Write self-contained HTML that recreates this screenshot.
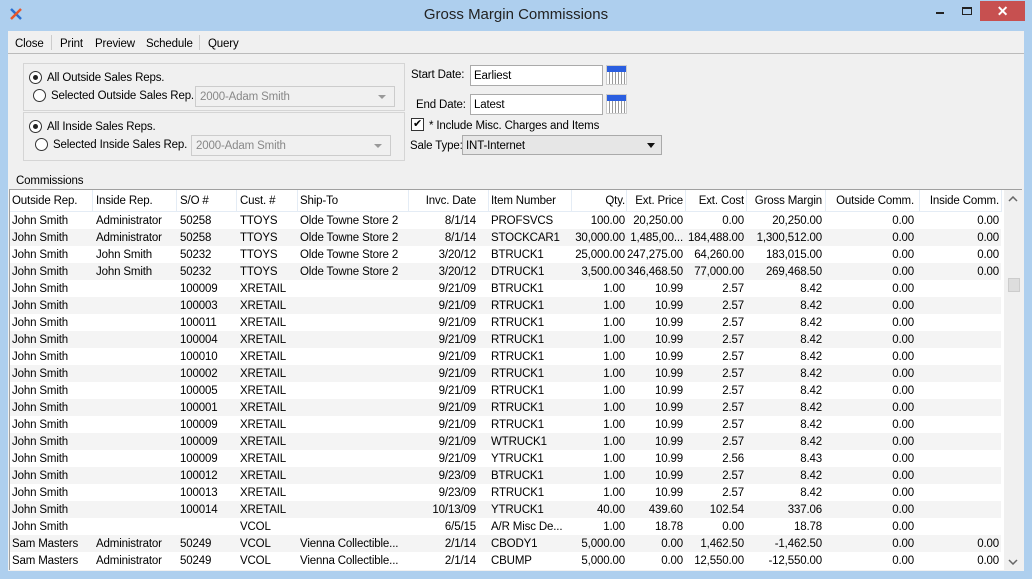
<!DOCTYPE html>
<html><head><meta charset="utf-8"><style>
*{box-sizing:border-box;margin:0;padding:0}
body{width:1032px;height:579px;background:#aecfee;font-family:"Liberation Sans",sans-serif;font-size:11.5px;letter-spacing:-0.15px;color:#000;position:relative;overflow:hidden}
.abs{position:absolute}
#client{left:8px;top:31px;width:1016px;height:540px;background:#f0f0f0}
.title{left:0;top:6px;width:1032px;text-align:center;font-size:15px;letter-spacing:0;color:#222}
.menu span{position:absolute;top:38px}
.sep{position:absolute;top:35px;width:1px;height:15px;background:#ccc}
.grp{border:1px solid #d5d5d5;background:#f0f0f0}
.radio{width:13px;height:13px;border:1px solid #333;border-radius:50%;background:#fff}
.radio.on::after{content:"";position:absolute;left:3px;top:3px;width:5px;height:5px;border-radius:50%;background:#222}
.combo{border:1px solid #ccc;background:#f0f0f0;color:#888;padding:4px 4px;height:21px}
.combo::after{content:"";position:absolute;right:8px;top:8px;border-left:4px solid transparent;border-right:4px solid transparent;border-top:4px solid #999}
.inp{border:1px solid #aaa;background:#fff;padding:4px 3px;height:21px}
.cal{width:21px;height:20px;border:1px solid #ccc;background:repeating-linear-gradient(90deg,#fff 0 2px,#999 2px 3px),#fff}
.cal::before{content:"";position:absolute;left:0;top:0;width:19px;height:6px;background:#2a5ee0}
#grid{left:9px;top:189px;width:1013px;height:381px;background:#fff;border-top:1px solid #a0a0a0;border-left:1px solid #a0a0a0}
.row{position:absolute;left:0;height:17px;width:991px;white-space:nowrap}
.row.alt{background:#f4f4f4}
.row div{position:absolute;top:3px;overflow:hidden;white-space:nowrap}
.hdr{height:22px;border-bottom:1px solid #e4ecf5}
.hdr div{top:5px}
.hl{position:absolute;top:0;width:1px;height:22px;background:#e4ecf5}
.c1{left:2px;width:80px}.c2{left:86px;width:80px}.c3{left:170px;width:60px}.c4{left:230px;width:60px}.c5{left:290px;width:106px}
.c6{left:398px;width:68px;text-align:right}.c7{left:481px;width:80px}.c8{left:561px;width:54px;text-align:right}.c9{left:616px;width:57px;text-align:right}
.c10{left:675px;width:59px;text-align:right}.c11{left:736px;width:76px;text-align:right}.c12{left:815px;width:89px;text-align:right}.c13{left:909px;width:80px;text-align:right}
</style></head><body>
<div class="abs" style="left:9px;top:7px;width:14px;height:14px">
<svg width="14" height="14" viewBox="0 0 14 14"><path d="M2 2 L12 12" stroke="#2a6fd0" stroke-width="2.5"/><path d="M12 2 L2 12" stroke="#e8562a" stroke-width="2.5"/></svg></div>
<div class="abs title">Gross Margin Commissions</div>
<div class="abs" style="left:936px;top:12px;width:8px;height:2px;background:#222"></div>
<div class="abs" style="left:962px;top:7px;width:10px;height:8px;border:1px solid #222;border-top-width:2px"></div>
<div class="abs" style="left:980px;top:1px;width:45px;height:20px;background:#c75050;color:#fff;text-align:center;font-size:14px;font-weight:bold;line-height:20px">✕</div>
<div id="client" class="abs"></div>
<div class="menu"><span style="left:15px">Close</span><span style="left:60px">Print</span><span style="left:95px">Preview</span><span style="left:146px">Schedule</span><span style="left:208px">Query</span></div>
<div class="sep" style="left:51px"></div><div class="sep" style="left:199px"></div>
<div class="abs" style="left:8px;top:53px;width:1016px;height:1px;background:#bbb"></div>
<div class="abs grp" style="left:23px;top:63px;width:382px;height:48px"></div>
<div class="abs grp" style="left:23px;top:112px;width:382px;height:49px"></div>
<div class="abs radio on" style="left:29px;top:71px"></div><div class="abs" style="left:47px;top:72px">All Outside Sales Reps.</div>
<div class="abs radio" style="left:33px;top:89px"></div><div class="abs" style="left:51px;top:90px">Selected Outside Sales Rep.</div>
<div class="abs combo" style="left:195px;top:86px;width:200px">2000-Adam Smith</div>
<div class="abs radio on" style="left:29px;top:120px"></div><div class="abs" style="left:47px;top:121px">All Inside Sales Reps.</div>
<div class="abs radio" style="left:35px;top:138px"></div><div class="abs" style="left:53px;top:139px">Selected Inside Sales Rep.</div>
<div class="abs combo" style="left:191px;top:135px;width:200px">2000-Adam Smith</div>
<div class="abs" style="left:411px;top:69px">Start Date:</div>
<div class="abs inp" style="left:470px;top:65px;width:133px">Earliest</div>
<div class="abs cal" style="left:606px;top:65px"></div>
<div class="abs" style="left:416px;top:99px">End Date:</div>
<div class="abs inp" style="left:470px;top:94px;width:133px">Latest</div>
<div class="abs cal" style="left:606px;top:94px"></div>
<div class="abs" style="left:411px;top:118px;width:13px;height:13px;border:1px solid #333;background:#fff;font-size:11px;line-height:11px;text-align:center">✔</div>
<div class="abs" style="left:429px;top:120px">* Include Misc. Charges and Items</div>
<div class="abs" style="left:410px;top:140px">Sale Type:</div>
<div class="abs" style="left:462px;top:135px;width:200px;height:20px;border:1px solid #aaa;background:#e6e6e6;padding:4px 3px">INT-Internet<span style="position:absolute;right:6px;top:7px;border-left:4px solid transparent;border-right:4px solid transparent;border-top:5px solid #111"></span></div>
<div class="abs" style="left:16px;top:175px">Commissions</div>
<div id="grid" class="abs">
<div class="row hdr"><div class="c1">Outside Rep.</div><div class="c2">Inside Rep.</div><div class="c3">S/O #</div><div class="c4">Cust. #</div><div class="c5">Ship-To</div><div class="c6">Invc. Date</div><div class="c7">Item Number</div><div class="c8">Qty.</div><div class="c9">Ext. Price</div><div class="c10">Ext. Cost</div><div class="c11">Gross Margin</div><div class="c12">Outside Comm.</div><div class="c13">Inside Comm.</div>
<span class="hl" style="left:82px"></span><span class="hl" style="left:166px"></span><span class="hl" style="left:226px"></span><span class="hl" style="left:287px"></span><span class="hl" style="left:398px"></span><span class="hl" style="left:478px"></span><span class="hl" style="left:561px"></span><span class="hl" style="left:616px"></span><span class="hl" style="left:675px"></span><span class="hl" style="left:736px"></span><span class="hl" style="left:815px"></span><span class="hl" style="left:909px"></span><span class="hl" style="left:991px"></span></div>
<div class="row" style="top:22px"><div class="c1">John Smith</div><div class="c2">Administrator</div><div class="c3">50258</div><div class="c4">TTOYS</div><div class="c5">Olde Towne Store 2</div><div class="c6">8/1/14</div><div class="c7">PROFSVCS</div><div class="c8">100.00</div><div class="c9">20,250.00</div><div class="c10">0.00</div><div class="c11">20,250.00</div><div class="c12">0.00</div><div class="c13">0.00</div></div>
<div class="row alt" style="top:39px"><div class="c1">John Smith</div><div class="c2">Administrator</div><div class="c3">50258</div><div class="c4">TTOYS</div><div class="c5">Olde Towne Store 2</div><div class="c6">8/1/14</div><div class="c7">STOCKCAR1</div><div class="c8">30,000.00</div><div class="c9">1,485,00...</div><div class="c10">184,488.00</div><div class="c11">1,300,512.00</div><div class="c12">0.00</div><div class="c13">0.00</div></div>
<div class="row" style="top:56px"><div class="c1">John Smith</div><div class="c2">John Smith</div><div class="c3">50232</div><div class="c4">TTOYS</div><div class="c5">Olde Towne Store 2</div><div class="c6">3/20/12</div><div class="c7">BTRUCK1</div><div class="c8">25,000.00</div><div class="c9">247,275.00</div><div class="c10">64,260.00</div><div class="c11">183,015.00</div><div class="c12">0.00</div><div class="c13">0.00</div></div>
<div class="row alt" style="top:73px"><div class="c1">John Smith</div><div class="c2">John Smith</div><div class="c3">50232</div><div class="c4">TTOYS</div><div class="c5">Olde Towne Store 2</div><div class="c6">3/20/12</div><div class="c7">DTRUCK1</div><div class="c8">3,500.00</div><div class="c9">346,468.50</div><div class="c10">77,000.00</div><div class="c11">269,468.50</div><div class="c12">0.00</div><div class="c13">0.00</div></div>
<div class="row" style="top:90px"><div class="c1">John Smith</div><div class="c3">100009</div><div class="c4">XRETAIL</div><div class="c6">9/21/09</div><div class="c7">BTRUCK1</div><div class="c8">1.00</div><div class="c9">10.99</div><div class="c10">2.57</div><div class="c11">8.42</div><div class="c12">0.00</div></div>
<div class="row alt" style="top:107px"><div class="c1">John Smith</div><div class="c3">100003</div><div class="c4">XRETAIL</div><div class="c6">9/21/09</div><div class="c7">RTRUCK1</div><div class="c8">1.00</div><div class="c9">10.99</div><div class="c10">2.57</div><div class="c11">8.42</div><div class="c12">0.00</div></div>
<div class="row" style="top:124px"><div class="c1">John Smith</div><div class="c3">100011</div><div class="c4">XRETAIL</div><div class="c6">9/21/09</div><div class="c7">RTRUCK1</div><div class="c8">1.00</div><div class="c9">10.99</div><div class="c10">2.57</div><div class="c11">8.42</div><div class="c12">0.00</div></div>
<div class="row alt" style="top:141px"><div class="c1">John Smith</div><div class="c3">100004</div><div class="c4">XRETAIL</div><div class="c6">9/21/09</div><div class="c7">RTRUCK1</div><div class="c8">1.00</div><div class="c9">10.99</div><div class="c10">2.57</div><div class="c11">8.42</div><div class="c12">0.00</div></div>
<div class="row" style="top:158px"><div class="c1">John Smith</div><div class="c3">100010</div><div class="c4">XRETAIL</div><div class="c6">9/21/09</div><div class="c7">RTRUCK1</div><div class="c8">1.00</div><div class="c9">10.99</div><div class="c10">2.57</div><div class="c11">8.42</div><div class="c12">0.00</div></div>
<div class="row alt" style="top:175px"><div class="c1">John Smith</div><div class="c3">100002</div><div class="c4">XRETAIL</div><div class="c6">9/21/09</div><div class="c7">RTRUCK1</div><div class="c8">1.00</div><div class="c9">10.99</div><div class="c10">2.57</div><div class="c11">8.42</div><div class="c12">0.00</div></div>
<div class="row" style="top:192px"><div class="c1">John Smith</div><div class="c3">100005</div><div class="c4">XRETAIL</div><div class="c6">9/21/09</div><div class="c7">RTRUCK1</div><div class="c8">1.00</div><div class="c9">10.99</div><div class="c10">2.57</div><div class="c11">8.42</div><div class="c12">0.00</div></div>
<div class="row alt" style="top:209px"><div class="c1">John Smith</div><div class="c3">100001</div><div class="c4">XRETAIL</div><div class="c6">9/21/09</div><div class="c7">RTRUCK1</div><div class="c8">1.00</div><div class="c9">10.99</div><div class="c10">2.57</div><div class="c11">8.42</div><div class="c12">0.00</div></div>
<div class="row" style="top:226px"><div class="c1">John Smith</div><div class="c3">100009</div><div class="c4">XRETAIL</div><div class="c6">9/21/09</div><div class="c7">RTRUCK1</div><div class="c8">1.00</div><div class="c9">10.99</div><div class="c10">2.57</div><div class="c11">8.42</div><div class="c12">0.00</div></div>
<div class="row alt" style="top:243px"><div class="c1">John Smith</div><div class="c3">100009</div><div class="c4">XRETAIL</div><div class="c6">9/21/09</div><div class="c7">WTRUCK1</div><div class="c8">1.00</div><div class="c9">10.99</div><div class="c10">2.57</div><div class="c11">8.42</div><div class="c12">0.00</div></div>
<div class="row" style="top:260px"><div class="c1">John Smith</div><div class="c3">100009</div><div class="c4">XRETAIL</div><div class="c6">9/21/09</div><div class="c7">YTRUCK1</div><div class="c8">1.00</div><div class="c9">10.99</div><div class="c10">2.56</div><div class="c11">8.43</div><div class="c12">0.00</div></div>
<div class="row alt" style="top:277px"><div class="c1">John Smith</div><div class="c3">100012</div><div class="c4">XRETAIL</div><div class="c6">9/23/09</div><div class="c7">BTRUCK1</div><div class="c8">1.00</div><div class="c9">10.99</div><div class="c10">2.57</div><div class="c11">8.42</div><div class="c12">0.00</div></div>
<div class="row" style="top:294px"><div class="c1">John Smith</div><div class="c3">100013</div><div class="c4">XRETAIL</div><div class="c6">9/23/09</div><div class="c7">RTRUCK1</div><div class="c8">1.00</div><div class="c9">10.99</div><div class="c10">2.57</div><div class="c11">8.42</div><div class="c12">0.00</div></div>
<div class="row alt" style="top:311px"><div class="c1">John Smith</div><div class="c3">100014</div><div class="c4">XRETAIL</div><div class="c6">10/13/09</div><div class="c7">YTRUCK1</div><div class="c8">40.00</div><div class="c9">439.60</div><div class="c10">102.54</div><div class="c11">337.06</div><div class="c12">0.00</div></div>
<div class="row" style="top:328px"><div class="c1">John Smith</div><div class="c4">VCOL</div><div class="c6">6/5/15</div><div class="c7">A/R Misc De...</div><div class="c8">1.00</div><div class="c9">18.78</div><div class="c10">0.00</div><div class="c11">18.78</div><div class="c12">0.00</div></div>
<div class="row alt" style="top:345px"><div class="c1">Sam Masters</div><div class="c2">Administrator</div><div class="c3">50249</div><div class="c4">VCOL</div><div class="c5">Vienna Collectible...</div><div class="c6">2/1/14</div><div class="c7">CBODY1</div><div class="c8">5,000.00</div><div class="c9">0.00</div><div class="c10">1,462.50</div><div class="c11">-1,462.50</div><div class="c12">0.00</div><div class="c13">0.00</div></div>
<div class="row" style="top:362px"><div class="c1">Sam Masters</div><div class="c2">Administrator</div><div class="c3">50249</div><div class="c4">VCOL</div><div class="c5">Vienna Collectible...</div><div class="c6">2/1/14</div><div class="c7">CBUMP</div><div class="c8">5,000.00</div><div class="c9">0.00</div><div class="c10">12,550.00</div><div class="c11">-12,550.00</div><div class="c12">0.00</div><div class="c13">0.00</div></div>
<div class="abs" style="left:994px;top:0;width:19px;height:381px;background:#f0f0f0"></div>
<svg class="abs" style="left:998px;top:6px" width="10" height="6"><path d="M1 5 L5 1 L9 5" stroke="#666" stroke-width="1.5" fill="none"/></svg>
<div class="abs" style="left:998px;top:88px;width:12px;height:14px;background:#ddd;border:1px solid #ccc"></div>
<svg class="abs" style="left:998px;top:369px" width="10" height="6"><path d="M1 1 L5 5 L9 1" stroke="#666" stroke-width="1.5" fill="none"/></svg>
</div>
</body></html>
